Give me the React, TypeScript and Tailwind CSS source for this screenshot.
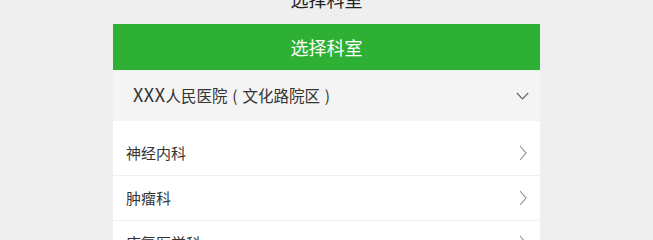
import React from 'react';

const departments = ['神经内科', '肿瘤科', '康复医学科'];

const ChevronRight = () => (
  <svg width="8" height="16" viewBox="0 0 8 16" fill="none" stroke="#8a8a8a" strokeWidth="1.1">
    <path d="M1 1 L7 8 L1 15" />
  </svg>
);

const ChevronDown = () => (
  <svg width="13" height="8" viewBox="0 0 13 8" fill="none" stroke="#666" strokeWidth="1.2">
    <path d="M0.8 1 L6.5 6.8 L12.2 1" />
  </svg>
);

const Paren = ({ ch }: { ch: string }) => (
  <span className="inline-block w-[15px] text-center">{ch}</span>
);

const App = () => {
  return (
    <div
      className="min-h-[240px] bg-[#efefef] text-[#333]"
      style={{ fontFamily: '"Noto Sans CJK SC", "Noto Sans", sans-serif' }}
    >
      <div className="h-[24px] overflow-hidden flex justify-center">
        <span className="text-[18px] leading-[24px] -mt-[13px] text-[#222]">选择科室</span>
      </div>
      <div className="w-[427px] mx-auto">
        <div className="h-[46px] bg-[#2db034] flex items-center justify-center text-white text-[18px]">
          选择科室
        </div>
        <div className="h-[51px] bg-[#f4f4f4] border-t border-[#e6f3e6] flex items-center justify-between pl-[20px] pr-[11px]">
          <span className="text-[15.5px] text-[#333] -mt-[3px] whitespace-nowrap">
            <span className="text-[18px] tracking-[0.5px]">XXX</span>人民医院<Paren ch="(" />文化路院区<Paren ch=")" />
          </span>
          <ChevronDown />
        </div>
        <div className="bg-white pt-[10px]">
          {departments.map((d) => (
            <div
              key={d}
              className="h-[45px] flex items-center justify-between pl-[13px] pr-[13px] border-b border-[#f0f0f0]"
            >
              <span className="text-[15px] text-[#333]">{d}</span>
              <ChevronRight />
            </div>
          ))}
        </div>
      </div>
    </div>
  );
};

export default App;
